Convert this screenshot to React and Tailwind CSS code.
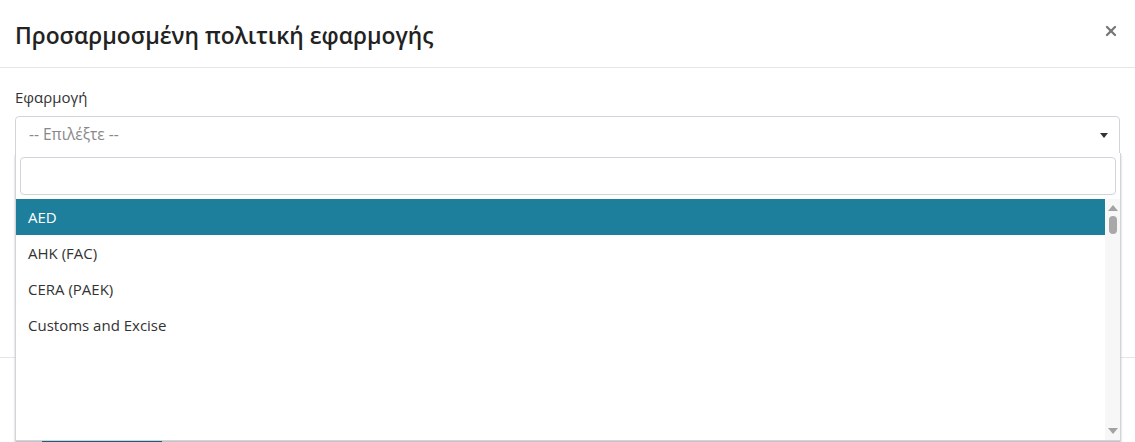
import { X } from 'lucide-react';

const OPTIONS = ['AED', 'AHK (FAC)', 'CERA (PAEK)', 'Customs and Excise'];

function Scrollbar() {
  return (
    <div className="w-[15px] self-stretch bg-[#f7f7f7] flex flex-col items-center justify-between py-[6px]">
      <div className="flex flex-col items-center gap-[5px]">
        <div className="w-0 h-0 border-l-[5px] border-r-[5px] border-b-[6px] border-l-transparent border-r-transparent border-b-[#a3a3a3]" />
        <div className="w-[8px] h-[18px] rounded-full bg-[#a8a8a8]" />
      </div>
      <div className="w-0 h-0 border-l-[5px] border-r-[5px] border-t-[6px] border-l-transparent border-r-transparent border-t-[#a3a3a3]" />
    </div>
  );
}

export default function App() {
  return (
    <div
      className="relative w-[1135px] h-[442px] overflow-hidden bg-white text-[#333]"
      style={{ fontFamily: '"Open Sans", "Noto Sans", sans-serif' }}
    >
      <div className="h-[68px] px-[15px] flex items-center justify-between border-b border-[#e5e5e5]">
        <h4 className="text-[22.8px] font-semibold text-[#222] leading-none mt-[6px]">Προσαρμοσμένη πολιτική εφαρμογής</h4>
        <X className="w-[16px] h-[16px] text-[#777] mr-[1px] mt-[-6px]" strokeWidth={3.5} />
      </div>

      <div className="px-[15px] pt-[18px] h-[289px]">
        <label className="block text-[15px] leading-[22px] text-[#333] mb-[8px]">Εφαρμογή</label>
        <div className="h-[38px] border border-[#d1d5db] rounded-t-[4px] flex items-center justify-between pl-[13px] pr-[11px]">
          <span className="text-[15.5px] text-[#888]">-- Επιλέξτε --</span>
          <div className="w-0 h-0 border-l-[4px] border-r-[4px] border-t-[5px] border-l-transparent border-r-transparent border-t-[#333]" />
        </div>
      </div>

      <div className="border-t border-[#e5e5e5] px-[15px] pt-[80px]">
        <div className="ml-[27px] w-[120px] h-[30px] bg-[#1d7f9c] rounded-[3px]" />
      </div>

      <div className="absolute left-[15px] top-[153px] w-[1106px] h-[288px] bg-white border border-[#d1d5db] border-t-0 shadow-[0_2px_2px_rgba(0,0,0,0.25)] flex flex-col">
        <div className="px-[4px] pt-[4px] pb-[4px]">
          <div className="h-[38px] border border-[#d1d5db] rounded-[4px]" />
        </div>
        <div className="flex-1 flex min-h-0">
          <ul className="flex-1 text-[15px]">
            {OPTIONS.map((o, i) => (
              <li
                key={o}
                className={
                  i === 0
                    ? 'h-[36px] flex items-center pl-[12px] bg-[#1d7f9c] text-white'
                    : 'h-[36px] flex items-center pl-[12px] text-[#333]'
                }
              >
                {o}
              </li>
            ))}
          </ul>
          <Scrollbar />
        </div>
      </div>
    </div>
  );
}
